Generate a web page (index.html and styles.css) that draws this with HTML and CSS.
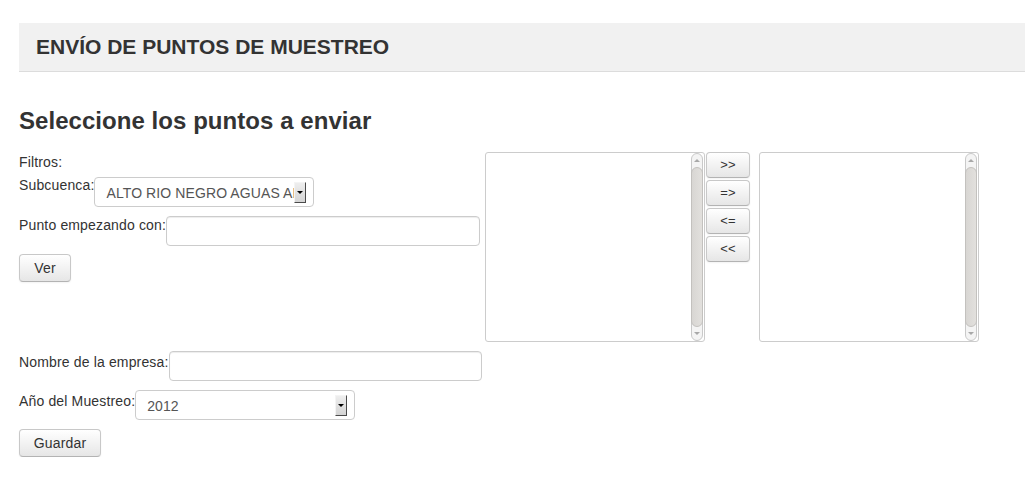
FILE: index.html
```html
<!DOCTYPE html>
<html lang="es">
<head>
<meta charset="utf-8">
<title>Envío de puntos de muestreo</title>
<link rel="stylesheet" href="styles.css">
</head>
<body>
<div class="page">
  <div class="page-header">ENVÍO DE PUNTOS DE MUESTREO</div>
  <h3 class="title">Seleccione los puntos a enviar</h3>

  <div class="main">
    <div class="filters">
      <div class="line">Filtros:</div>
      <div class="row row-sub">
        <label class="lbl">Subcuenca:</label>
        <div class="select sel-sub">
          <span class="sel-text">ALTO RIO NEGRO AGUAS AB</span>
          <span class="sel-arrow"><span class="tri"></span></span>
        </div>
      </div>
      <div class="row row-punto">
        <label class="lbl">Punto empezando con:</label>
        <div class="input in-punto"></div>
      </div>
      <button class="btn btn-ver" type="button">Ver</button>
    </div>

    <div class="listbox">
      <div class="list-body"></div>
      <div class="scroll">
        <div class="sc-up"><span class="sc-tri up"></span></div>
        <div class="sc-thumb"></div>
        <div class="sc-down"><span class="sc-tri down"></span></div>
      </div>
    </div>

    <div class="movers">
      <button class="btn btn-move" type="button">&gt;&gt;</button>
      <button class="btn btn-move" type="button">=&gt;</button>
      <button class="btn btn-move" type="button">&lt;=</button>
      <button class="btn btn-move" type="button">&lt;&lt;</button>
    </div>

    <div class="listbox listbox-right">
      <div class="list-body"></div>
      <div class="scroll">
        <div class="sc-up"><span class="sc-tri up"></span></div>
        <div class="sc-thumb"></div>
        <div class="sc-down"><span class="sc-tri down"></span></div>
      </div>
    </div>
  </div>

  <div class="bottom">
    <div class="row row-nombre">
      <label class="lbl">Nombre de la empresa:</label>
      <div class="input in-nombre"></div>
    </div>
    <div class="row row-anio">
      <label class="lbl">Año del Muestreo:</label>
      <div class="select sel-anio">
        <span class="sel-text">2012</span>
        <span class="sel-arrow"><span class="tri"></span></span>
      </div>
    </div>
    <button class="btn btn-guardar" type="button">Guardar</button>
  </div>
</div>
</body>
</html>
```

FILE: styles.css
```css
html, body {
  margin: 0;
  padding: 0;
  background: #fff;
}
body {
  font-family: "Liberation Sans", Arial, Helvetica, sans-serif;
  font-size: 14px;
  line-height: 20px;
  color: #333;
}
.page {
  padding: 23px 0 0 19px;
}
.page-header {
  background: #f1f1f1;
  border-bottom: 1px solid #dcdcdc;
  padding: 12px 0 12px 17px;
  font-size: 21px;
  line-height: 24px;
  font-weight: bold;
  color: #333;
}
.title {
  margin: 29px 0 11px 0;
  font-size: 24px;
  line-height: 40px;
  font-weight: bold;
  color: #333;
  letter-spacing: 0.05px;
}
.main {
  display: flex;
  align-items: flex-start;
  height: 190px;
}
.filters {
  width: 466px;
  flex: none;
}
.line {
  height: 20px;
  letter-spacing: 0.15px;
}
.row {
  display: flex;
  align-items: flex-start;
}
.lbl {
  white-space: nowrap;
  line-height: 20px;
  letter-spacing: 0.15px;
}
.row-sub {
  margin-top: 3px;
}
.row-sub .select {
  margin-top: 2px;
}
.row-punto {
  margin-top: 8px;
}
.row-punto .input {
  margin-top: 1px;
}
.select {
  position: relative;
  box-sizing: border-box;
  height: 30px;
  border: 1px solid #ccc;
  border-radius: 4px;
  background: #fff;
  color: #555;
  display: flex;
  align-items: center;
  padding-left: 11px;
  overflow: hidden;
}
.sel-sub {
  width: 220px;
}
.sel-anio {
  width: 220px;
}
.sel-text {
  white-space: nowrap;
  overflow: hidden;
  flex: 1;
  line-height: 20px;
  padding-top: 1px;
  letter-spacing: 0.1px;
}
.sel-arrow {
  flex: none;
  width: 10px;
  height: 19px;
  margin-right: 7px;
  background: linear-gradient(#eeeeee, #d4d4d4);
  border-top: 1px solid #f4f4f4;
  border-left: 1px solid #f4f4f4;
  border-right: 1px solid #4a4a4a;
  border-bottom: 1px solid #4a4a4a;
  display: flex;
  justify-content: center;
  align-items: center;
}
.tri {
  width: 0;
  height: 0;
  border-left: 3px solid transparent;
  border-right: 3px solid transparent;
  border-top: 3px solid #000;
}
.input {
  box-sizing: border-box;
  height: 30px;
  border: 1px solid #ccc;
  border-radius: 4px;
  background: #fff;
  box-shadow: inset 0 1px 1px rgba(0,0,0,0.075);
}
.in-punto {
  width: 314px;
}
.in-nombre {
  width: 313px;
  margin-left: 1px;
}
.btn {
  box-sizing: border-box;
  font-family: "Liberation Sans", Arial, Helvetica, sans-serif;
  font-size: 14px;
  line-height: 20px;
  color: #333;
  background: linear-gradient(#ffffff, #e6e6e6);
  border: 1px solid #c8c8c8;
  border-bottom-color: #b3b3b3;
  border-radius: 4px;
  box-shadow: inset 0 1px 0 rgba(255,255,255,0.2), 0 1px 2px rgba(0,0,0,0.05);
  padding: 3px 12px;
  height: 28px;
  margin: 0;
  display: block;
  text-align: center;
  letter-spacing: 0.15px;
}
.btn-ver {
  width: 52px;
  margin-top: 8px;
}
.listbox {
  box-sizing: border-box;
  width: 220px;
  height: 190px;
  border: 1px solid #ccc;
  border-radius: 3px;
  background: #fff;
  display: flex;
  flex: none;
}
.list-body {
  flex: 1;
}
.scroll {
  width: 12px;
  margin-right: 1px;
  box-sizing: border-box;
  border: 1px solid #c9c9c9;
  border-radius: 6px;
  background: #f4f4f4;
  display: flex;
  flex-direction: column;
}
.sc-up, .sc-down {
  height: 13px;
  display: flex;
  justify-content: center;
  align-items: center;
  flex: none;
}
.sc-thumb {
  flex: 1;
  margin: 0 -1px;
  background: linear-gradient(90deg, #d8d6d3, #e2e0dd);
  border: 1px solid #c3c1be;
  border-radius: 6px;
}
.sc-tri {
  width: 0;
  height: 0;
  border-left: 3px solid transparent;
  border-right: 3px solid transparent;
}
.sc-tri.up {
  border-bottom: 3px solid #a8a8a8;
}
.sc-tri.down {
  border-top: 3px solid #a8a8a8;
}
.movers {
  width: 44px;
  margin-left: 1px;
  display: flex;
  flex-direction: column;
  gap: 2px;
  flex: none;
}
.btn-move {
  width: 44px;
  height: 26px;
  padding: 0;
  font-size: 13px;
  line-height: 24px;
}
.listbox-right {
  margin-left: 9px;
}
.bottom {
  margin-top: 9px;
}
.row-nombre .lbl {
  margin-top: 1px;
}
.row-anio {
  margin-top: 9px;
}
.row-anio .lbl {
  margin-top: 1px;
}
.btn-guardar {
  width: 82px;
  margin-top: 9px;
}
```
